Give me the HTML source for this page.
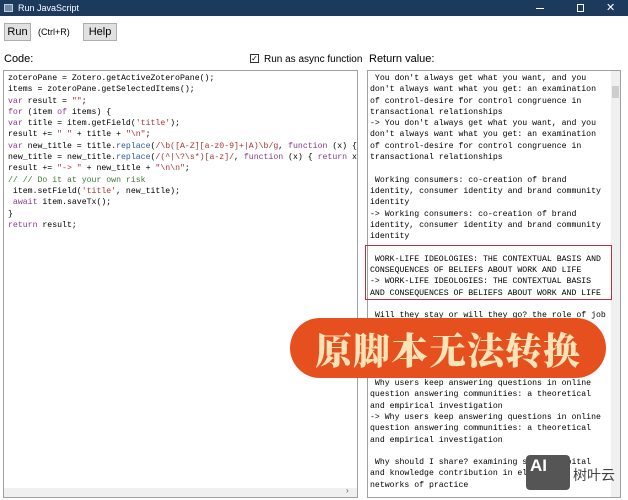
<!DOCTYPE html>
<html><head><meta charset="utf-8"><style>
*{margin:0;padding:0;box-sizing:border-box}
body{width:628px;height:500px;background:#fff;font-family:"Liberation Sans",sans-serif;position:relative;overflow:hidden}
.tb{position:absolute;left:0;top:0;width:628px;height:16px;background:#1b3a5c;color:#fff;font-size:9px}
.btn{position:absolute;top:23px;height:18px;background:#e1e1e1;border:1px solid #adadad;font-size:11px;text-align:center;line-height:16px}
.lbl{position:absolute;font-size:11px;color:#000}
.box{position:absolute;border:1px solid #a0a0a0;background:#fff;font-family:"Liberation Mono",monospace;font-size:8.2px;line-height:11.3px;white-space:pre;overflow:hidden}
.k{color:#8a3a8a}.s{color:#a33}.c{color:#3a7a3a}.r{color:#2a5aa0}
</style></head><body>
<div class="tb">
<div style="position:absolute;left:4px;top:4px;width:9px;height:8px;border:1px solid #ccc;background:#6a8ab0"></div>
<div style="position:absolute;left:18px;top:3px">Run JavaScript</div>
<div style="position:absolute;left:536px;top:8px;width:8px;height:1px;background:#fff"></div>
<div style="position:absolute;left:577px;top:4px;width:7px;height:8px;border:1px solid #fff"></div>
<div style="position:absolute;left:606px;top:1px;font-size:11px">✕</div>
</div>
<div class="btn" style="left:4px;width:27px">Run</div>
<div class="lbl" style="left:38px;top:27px;font-size:9px">(Ctrl+R)</div>
<div class="btn" style="left:83px;width:34px">Help</div>
<div class="lbl" style="left:4px;top:53px">Code:</div>
<div style="position:absolute;left:250px;top:54px;width:9px;height:9px;border:1px solid #333;font-size:8px;line-height:7px;text-align:center">✓</div>
<div class="lbl" style="left:264px;top:54px;font-size:10px">Run as async function</div>
<div class="lbl" style="left:369px;top:53px">Return value:</div>
<div class="box" style="left:3px;top:70px;width:355px;height:428px;padding:2px 0 0 4px">zoteroPane = Zotero.getActiveZoteroPane();
items = zoteroPane.getSelectedItems();
<span class="k">var</span> result = <span class="s">""</span>;
<span class="k">for</span> (item <span class="k">of</span> items) {
<span class="k">var</span> title = item.getField(<span class="s">'title'</span>);
result += <span class="s">" "</span> + title + <span class="s">"\n"</span>;
<span class="k">var</span> new_title = title.<span class="r">replace</span>(<span class="s">/\b([A-Z][a-z0-9]+|A)\b/g</span>, <span class="k">function</span> (x) {
new_title = new_title.<span class="r">replace</span>(<span class="s">/(^|\?\s*)[a-z]/</span>, <span class="k">function</span> (x) { <span class="k">return</span> x
result += <span class="s">"-> "</span> + new_title + <span class="s">"\n\n"</span>;
<span class="c">// // Do it at your own risk</span>
 item.setField(<span class="s">'title'</span>, new_title);
 <span class="k">await</span> item.saveTx();
}
<span class="k">return</span> result;</div>
<div style="position:absolute;left:4px;top:488px;width:353px;height:9px;background:#f0f0f0"></div>
<div style="position:absolute;left:346px;top:486px;font-size:8px;color:#555">›</div>
<div class="box" style="left:367px;top:70px;width:254px;height:428px;padding:2px 0 0 2px"> You don't always get what you want, and you
don't always want what you get: an examination
of control-desire for control congruence in
transactional relationships
-> You don't always get what you want, and you
don't always want what you get: an examination
of control-desire for control congruence in
transactional relationships

 Working consumers: co-creation of brand
identity, consumer identity and brand community
identity
-> Working consumers: co-creation of brand
identity, consumer identity and brand community
identity

 WORK-LIFE IDEOLOGIES: THE CONTEXTUAL BASIS AND
CONSEQUENCES OF BELIEFS ABOUT WORK AND LIFE
-> WORK-LIFE IDEOLOGIES: THE CONTEXTUAL BASIS
AND CONSEQUENCES OF BELIEFS ABOUT WORK AND LIFE

 Will they stay or will they go? the role of job





 Why users keep answering questions in online
question answering communities: a theoretical
and empirical investigation
-> Why users keep answering questions in online
question answering communities: a theoretical
and empirical investigation

 Why should I share? examining social capital
and knowledge contribution in electronic
networks of practice</div>
<div style="position:absolute;left:611px;top:71px;width:9px;height:426px;background:#f0f0f0"></div>
<div style="position:absolute;left:612px;top:86px;width:7px;height:12px;background:#cdcdcd"></div>
<div style="position:absolute;left:365px;top:245px;width:247px;height:55px;border:1.5px solid #c0303c"></div>
<div style="position:absolute;left:290px;top:318px;width:316px;height:60px;background:#e5501e;border-radius:30px;color:#fbe3b8;font-family:'Noto Serif CJK SC','Noto Sans CJK SC',sans-serif;font-weight:900;font-size:37px;line-height:60px;text-align:center;letter-spacing:1px">原脚本无法转换</div>
<div style="position:absolute;left:526px;top:455px;width:44px;height:35px;background:#555;border-radius:4px;color:#fff;font-weight:bold;font-size:17px;padding-left:4px;line-height:22px">AI</div>
<div style="position:absolute;left:573px;top:465px;font-family:'Noto Sans CJK SC',sans-serif;font-size:14px;color:#444">树叶云</div>
</body></html>
